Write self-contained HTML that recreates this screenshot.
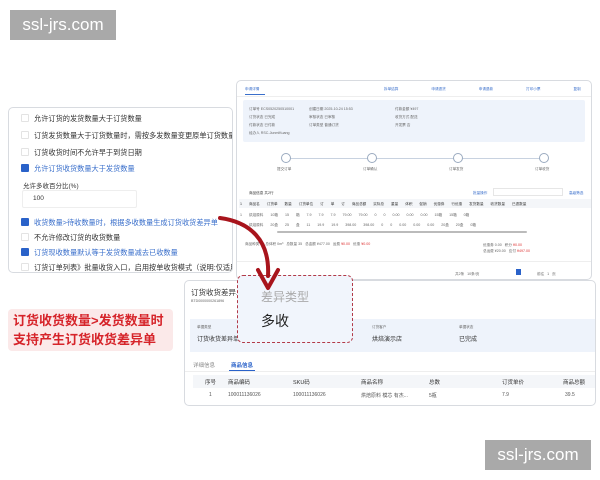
<!DOCTYPE html>
<html><head><meta charset="utf-8"><style>
*{margin:0;padding:0;box-sizing:border-box}
html,body{overflow:hidden}
body{width:600px;height:480px;background:#fff;position:relative;overflow:hidden;font-family:"Liberation Sans","Noto Sans CJK SC",sans-serif;color:#333}
.abs{position:absolute}
.wm{background:#a9a9a9;color:#fff;font-size:17px;text-align:center;line-height:30px;width:106px;height:30px}
.panel{border:1px solid #d8dbe0;border-radius:5px;background:#fff;overflow:hidden}
.opt{position:absolute;left:12px;font-size:7.2px;color:#333;white-space:nowrap}
.opt i{display:inline-block;width:8px;height:8px;border:1px solid #e3e3e3;border-radius:1px;vertical-align:-1px;margin-right:5px;background:#fff}
.opt.on{color:#3a6fcb}
.opt.on i{background:#2a62c9;border-color:#2a62c9}
.t{position:absolute;font-size:3.6px;color:#666;white-space:nowrap}
.b{color:#3a6fcb}
.r{color:#d33}
</style></head><body>
<div class="abs wm" style="left:10px;top:10px">ssl-jrs.com</div>
<div class="abs wm" style="left:485px;top:440px">ssl-jrs.com</div>

<div class="abs panel" style="left:236px;top:80px;width:356px;height:200px">
 <div class="t b" style="left:8px;top:6px">申请详情</div>
 <div class="abs" style="left:8px;top:13px;width:20px;height:1px;background:#3a6fcb"></div>
 <div class="t b" style="left:147px;top:6px;word-spacing:10px">拆单结算 &nbsp; 申请退货 &nbsp; 申请退款 &nbsp; 打印小票 &nbsp; 复制 &nbsp; 审核 &nbsp; 打印 &nbsp; 关闭</div>
 <div class="abs" style="left:0;top:15px;width:354px;height:1px;background:#eee"></div>
 <div class="abs" style="left:6px;top:19px;width:342px;height:42px;background:#eef3fb;border-radius:2px"></div>
 <div class="t" style="left:12px;top:24px;line-height:8px">订单号 ECS0520250510001<br>订货状态 已完成<br>付款状态 已付款<br>经办人 RSC-JunmiKuang</div>
 <div class="t" style="left:72px;top:24px;line-height:8px">创建日期 2025-10-24 15:53<br>审核状态 已审核<br>订单类型 普通订货</div>
 <div class="t" style="left:158px;top:24px;line-height:8px">付款金额 ¥497<br>收货方式 配送<br>开发票 否</div>
 <div class="abs" style="left:52px;top:77px;width:256px;height:1px;background:#c8d2e0"></div>
 <div class="abs" style="left:44px;top:72px;width:10px;height:10px;border:1px solid #9aaabf;border-radius:50%;background:#fff"></div>
 <div class="abs" style="left:130px;top:72px;width:10px;height:10px;border:1px solid #9aaabf;border-radius:50%;background:#fff"></div>
 <div class="abs" style="left:216px;top:72px;width:10px;height:10px;border:1px solid #9aaabf;border-radius:50%;background:#fff"></div>
 <div class="abs" style="left:302px;top:72px;width:10px;height:10px;border:1px solid #9aaabf;border-radius:50%;background:#fff"></div>
 <div class="t" style="left:40px;top:86px">提交订单</div><div class="t" style="left:126px;top:86px">订单确认</div><div class="t" style="left:212px;top:86px">订单发货</div><div class="t" style="left:298px;top:86px">订单收货</div>
 <div class="t" style="left:12px;top:110px;color:#333">商品信息 共2行</div>
 <div class="t b" style="left:236px;top:110px">批量操作</div>
 <div class="abs" style="left:256px;top:107px;width:70px;height:8px;border:1px solid #e6e6e6"></div>
 <div class="t b" style="left:332px;top:110px">高级筛选</div>
 <div class="abs" style="left:2px;top:118px;width:352px;height:9px;background:#f4f6f9"></div>
 <div class="t" style="left:3px;top:121px;color:#333;word-spacing:6px">1 商品名 订货单 数量 订货单位 订 单 订 商品总额 实际总 重量 体积 促销 优惠券 行优惠 发货数量 收货数量 已退数量</div>
 <div class="t" style="left:3px;top:132px;word-spacing:6px">1 烘焙原料 10箱 15 箱 7.9 7.9 7.9 79.00 79.00 0 0 0.00 0.00 0.00 15箱 15箱 0箱</div>
 <div class="t" style="left:3px;top:142px;word-spacing:6px">2 烘焙原料 20盒 25 盒 11 19.9 19.9 398.00 398.00 0 0 0.00 0.00 0.00 20盒 20盒 0箱</div>
 <div class="abs" style="left:40px;top:150px;width:250px;height:2px;background:#bbb;border-radius:1px"></div>
 <div class="t" style="left:8px;top:161px">商品种类 2 &nbsp; 总体积 0m³ &nbsp; 总数量 35 &nbsp; 总金额 ¥477.00 &nbsp; 运费 <span class="r">¥0.00</span> &nbsp; 优惠 <span class="r">¥0.00</span></div>
 <div class="t" style="left:246px;top:161px;line-height:6px">优惠券 0.00 &nbsp; 积分 <span class="r">¥0.00</span><br>总运费 ¥20.00 &nbsp; 应付 <span class="r">¥497.00</span></div>
 <div class="abs" style="left:0;top:180px;width:354px;height:1px;background:#eee"></div>
 <div class="t" style="left:218px;top:191px">共2条 &nbsp; 10条/页</div>
 <div class="abs" style="left:279px;top:188px;width:5px;height:6px;background:#2a62c9"></div>
 <div class="t" style="left:300px;top:191px">前往 &nbsp; 1 &nbsp; 页</div>
</div>

<div class="abs panel" style="left:8px;top:107px;width:225px;height:166px">
 <div class="opt" style="top:6px"><i></i>允许订货的发货数量大于订货数量</div>
 <div class="opt" style="top:23px"><i></i>订货发货数量大于订货数量时，需按多发数量变更原单订货数量</div>
 <div class="opt" style="top:40px"><i></i>订货收货时间不允许早于到货日期</div>
 <div class="opt on" style="top:56px"><i></i>允许订货收货数量大于发货数量</div>
 <div class="opt" style="top:72px;left:14px;font-size:6.5px">允许多收百分比(%)</div>
 <div class="abs" style="left:13px;top:82px;width:115px;height:18px;border:1px solid #eee;border-radius:2px;font-size:6.5px;line-height:16px;padding-left:10px">100</div>
 <div class="opt on" style="top:110px"><i></i>收货数量&gt;待收数量时，根据多收数量生成订货收货差异单</div>
 <div class="opt" style="top:125px"><i></i>不允许修改订货的收货数量</div>
 <div class="opt on" style="top:140px"><i></i>订货现收数量默认等于发货数量减去已收数量</div>
 <div class="opt" style="top:155px"><i></i>订货订单列表》批量收货入口，启用按单收货模式（说明:仅适用</div>
</div>

<div class="abs panel" style="left:184px;top:280px;width:412px;height:126px">
 <div class="abs" style="left:6px;top:6px;font-size:7.5px;color:#333">订货收货差异单</div>
 <div class="t" style="left:6px;top:18px">BTD0000000261896</div>
 <div class="abs" style="left:5px;top:38px;width:406px;height:33px;background:#eef3fb"></div>
 <div class="t" style="left:12px;top:44px">单据类型</div><div class="abs" style="left:12px;top:53px;font-size:6px">订货收货差异单</div>
 <div class="t" style="left:105px;top:44px">发货仓</div><div class="abs" style="left:105px;top:53px;font-size:6px">总部仓库店</div>
 <div class="t" style="left:187px;top:44px">订货客户</div><div class="abs" style="left:187px;top:53px;font-size:6px">烘焙演示店</div>
 <div class="t" style="left:274px;top:44px">单据状态</div><div class="abs" style="left:274px;top:53px;font-size:6px">已完成</div>
 <div class="abs" style="left:8px;top:80px;font-size:5.5px;color:#888">详细信息</div>
 <div class="abs" style="left:46px;top:80px;font-size:5.5px;color:#2a62c9;font-weight:bold">商品信息</div>
 <div class="abs" style="left:44px;top:89px;width:26px;height:1px;background:#2a62c9"></div>
 <div class="abs" style="left:0;top:90px;width:410px;height:1px;background:#eee"></div>
 <div class="abs" style="left:8px;top:94px;width:402px;height:13px;background:#f4f6f9"></div>
 <div class="abs" style="left:0;top:97px;font-size:5.5px;color:#333;width:410px;height:8px">
  <span class="abs" style="left:20px">序号</span><span class="abs" style="left:43px">商品编码</span><span class="abs" style="left:108px">SKU码</span><span class="abs" style="left:176px">商品名称</span><span class="abs" style="left:244px">总数</span><span class="abs" style="left:317px">订货单价</span><span class="abs" style="left:378px">商品总额</span></div>
 <div class="abs" style="left:0;top:111px;font-size:5px;color:#555;width:410px;height:8px">
  <span class="abs" style="left:24px">1</span><span class="abs" style="left:43px">100011136026</span><span class="abs" style="left:108px">100011136026</span><span class="abs" style="left:176px">烘焙原料 模芯 有杰...</span><span class="abs" style="left:244px">5瓶</span><span class="abs" style="left:317px">7.9</span><span class="abs" style="left:380px">39.5</span></div>
</div>

<div class="abs" style="left:8px;top:309px;width:165px;height:42px;background:#fbe9e9;border-radius:4px"></div>
<div class="abs" style="left:13px;top:311px;font-size:13px;font-weight:bold;color:#d6242a;line-height:19px;white-space:nowrap">订货收货数量&gt;发货数量时<br>支持产生订货收货差异单</div>

<div class="abs" style="left:237px;top:275px;width:116px;height:68px;background:#f1f5fc;border:1px dashed #b23a48;border-radius:6px">
 <div class="abs" style="left:23px;top:12px;font-size:12px;color:#aaa">差异类型</div>
 <div class="abs" style="left:23px;top:35px;font-size:14px;color:#222">多收</div>
</div>

<svg class="abs" style="left:0;top:0" width="600" height="480">
 <path d="M220 218 C250 222 270 240 268 276" stroke="#a8141c" stroke-width="4" fill="none" stroke-linecap="round"/>
 <path d="M258 270 L268 288 L278 270" stroke="#a8141c" stroke-width="4" fill="none" stroke-linecap="round" stroke-linejoin="round"/>
</svg>
</body></html>
